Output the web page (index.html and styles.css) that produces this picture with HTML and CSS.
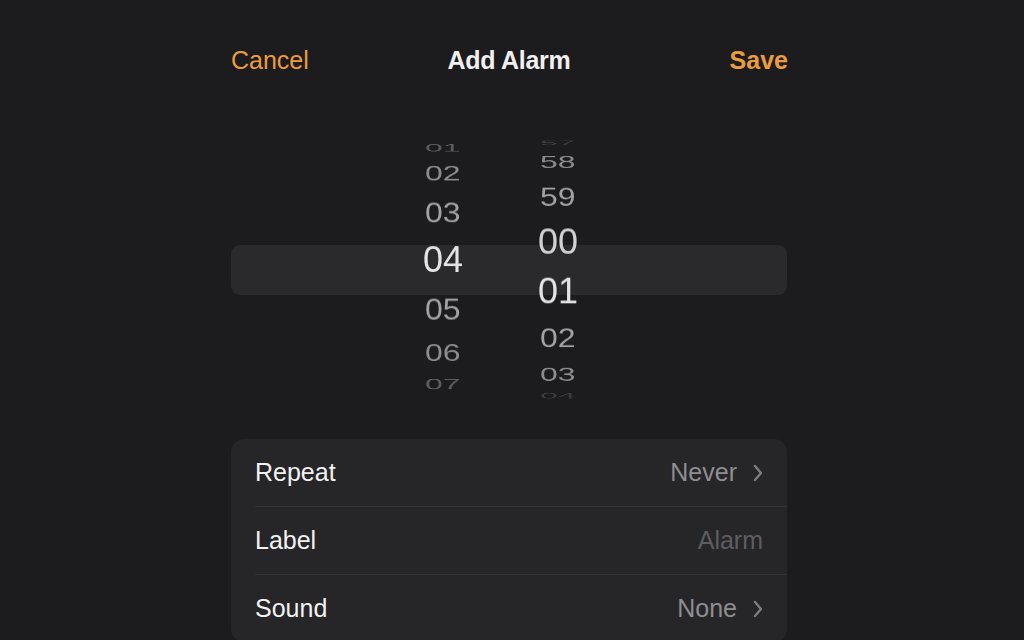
FILE: index.html
```html
<!DOCTYPE html>
<html lang="en">
<head>
<meta charset="utf-8">
<title>Add Alarm</title>
<link rel="stylesheet" href="styles.css">
</head>
<body>
<main class="sheet">
  <header class="nav">
    <span class="nav-btn">Cancel</span>
    <span class="nav-title">Add Alarm</span>
    <span class="nav-btn nav-save">Save</span>
  </header>

  <section class="picker">
    <div class="band"></div>
    <div class="wheels">
      <div class="wheel">
        <span class="num far" style="--r:70.1deg">01</span>
        <span class="num mid" style="--r:48.2deg">02</span>
        <span class="num near" style="--r:26.3deg">03</span>
        <span class="num sel" style="--r:4.4deg">04</span>
        <span class="num near" style="--r:-17.5deg">05</span>
        <span class="num mid" style="--r:-39.4deg">06</span>
        <span class="num far" style="--r:-61.3deg">07</span>
      </div>
      <div class="wheel">
        <span class="num edge" style="--r:78.1deg">57</span>
        <span class="num mid" style="--r:56.2deg">58</span>
        <span class="num near" style="--r:34.3deg">59</span>
        <span class="num sel dim" style="--r:12.4deg">00</span>
        <span class="num sel" style="--r:-9.5deg">01</span>
        <span class="num near" style="--r:-31.4deg">02</span>
        <span class="num mid" style="--r:-53.3deg">03</span>
        <span class="num edge" style="--r:-75.2deg">04</span>
      </div>
    </div>
  </section>

  <section class="list">
    <div class="row">
      <div class="row-inner">
        <span class="row-label">Repeat</span>
        <span class="row-value">Never
          <svg class="chev" viewBox="0 0 10 18" width="10" height="18"><path d="M2 2 L8 9 L2 16" /></svg>
        </span>
      </div>
    </div>
    <div class="row">
      <div class="row-inner">
        <span class="row-label">Label</span>
        <span class="row-value placeholder">Alarm</span>
      </div>
    </div>
    <div class="row">
      <div class="row-inner last">
        <span class="row-label">Sound</span>
        <span class="row-value">None
          <svg class="chev" viewBox="0 0 10 18" width="10" height="18"><path d="M2 2 L8 9 L2 16" /></svg>
        </span>
      </div>
    </div>
  </section>
</main>
</body>
</html>
```

FILE: styles.css
```css
html, body {
  margin: 0;
  padding: 0;
  background: #1c1b1e;
  height: 100%;
  overflow: hidden;
}

body {
  font-family: "Liberation Sans", Arial, sans-serif;
  color: #f2f2f2;
}

.sheet {
  width: 556px;
  margin-left: 231px;
}

.nav {
  height: 120px;
  display: grid;
  grid-template-columns: 1fr auto 1fr;
  align-items: center;
  font-size: 25px;
}

.nav-btn {
  color: #eb9c3c;
  justify-self: start;
}

.nav-title {
  font-weight: 700;
  color: #f0f0f0;
  letter-spacing: -0.3px;
}

.nav-save {
  font-weight: 700;
  justify-self: end;
  margin-right: -1px;
}

.picker {
  height: 300px;
  display: grid;
}

.band,
.wheels {
  grid-area: 1 / 1;
}

.band {
  align-self: center;
  height: 50px;
  border-radius: 9px;
  background: #2a292c;
}

.wheels {
  display: flex;
  align-items: center;
  padding-left: 172px;
  gap: 35px;
}

.wheel {
  width: 80px;
  height: 266px;
  display: grid;
  overflow: hidden;
}

.num {
  grid-area: 1 / 1;
  align-self: center;
  justify-self: center;
  font-size: 32px;
  line-height: 1;
  transform: rotateX(var(--r)) translateZ(130px);
  color: #9c9c9f;
}

.num.sel {
  font-size: 36px;
  color: #e4e4e6;
}

.num.sel.dim {
  color: #d2d2d4;
}

.num.near { color: #a2a2a5; }
.num.mid { color: #8c8c8f; }
.num.far { color: #5c5c5f; }
.num.edge { color: #3c3c3f; }

.list {
  margin-top: 19px;
  background: #262528;
  border-radius: 13px;
  overflow: hidden;
}

.row {
  padding-left: 24px;
}

.row-inner {
  height: 67px;
  display: flex;
  align-items: center;
  justify-content: space-between;
  padding-right: 24px;
  border-bottom: 1px solid #343336;
  font-size: 25px;
}

.row-inner.last {
  border-bottom: none;
}

.row-label {
  color: #f2f2f2;
}

.row-value {
  display: flex;
  align-items: center;
  gap: 16px;
  color: #8e8e91;
}

.row-value.placeholder {
  color: #5e5e61;
}

.chev {
  fill: none;
  stroke: #7c7c80;
  stroke-width: 2.4;
  stroke-linecap: round;
  stroke-linejoin: round;
}
```
